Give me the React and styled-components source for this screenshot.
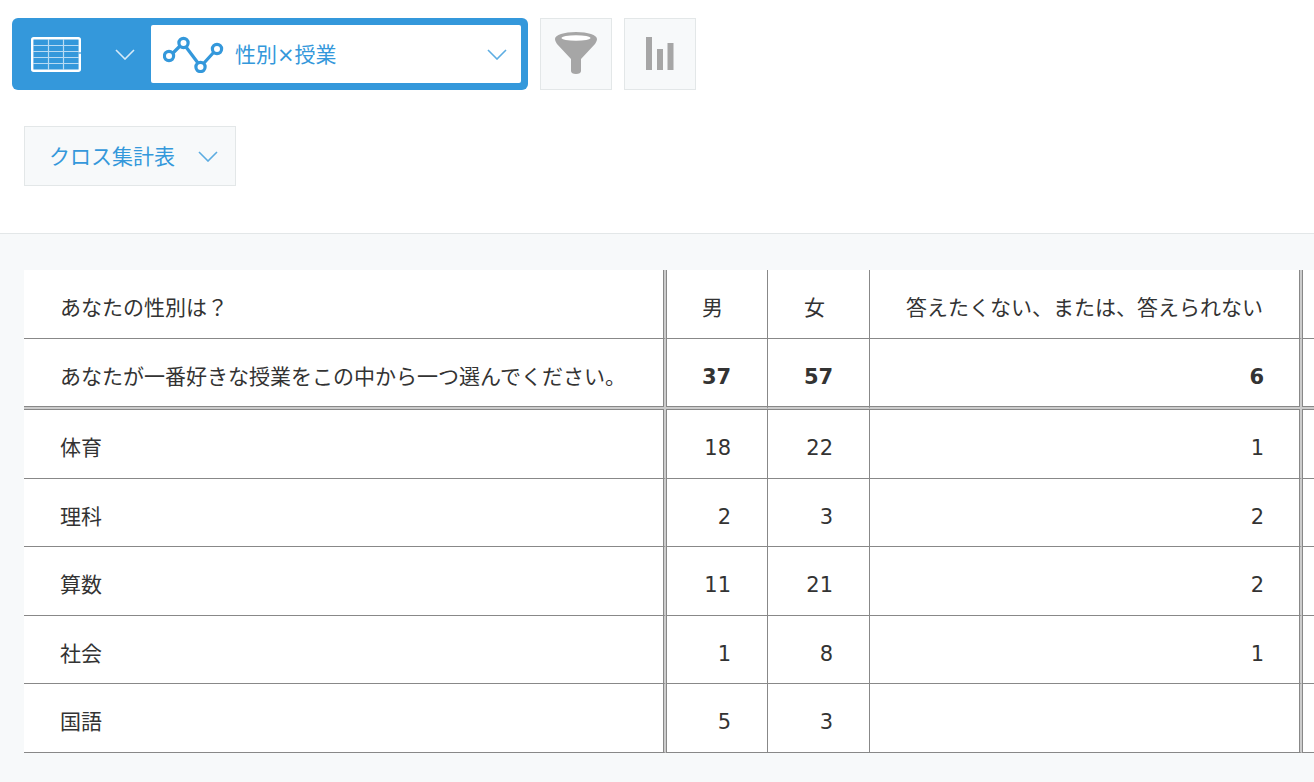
import React from 'react';
import styled, { createGlobalStyle } from 'styled-components';

const GlobalStyle = createGlobalStyle`
  html, body {
    margin: 0;
    padding: 0;
    height: 100%;
    background: #fff;
    overflow: hidden;
  }
  body {
    font-family: "DejaVu Sans", "Noto Sans CJK JP", sans-serif;
    color: #333;
  }
`;

const BLUE = '#3498db';
const LINE = '#888';
const LINE_MID = '#ccc';

// HEADER
const Header = styled.header`
  height: 234px;
  box-sizing: border-box;
  padding: 18px 0 0 12px;
  border-bottom: 1px solid #e3e7e8;
  background: #fff;
`;

const Toolbar = styled.div`
  display: flex;
  gap: 12px;
`;

const ViewPicker = styled.div`
  width: 516px;
  height: 72px;
  box-sizing: border-box;
  padding: 7px;
  display: flex;
  background: ${BLUE};
  border-radius: 6px;
`;

const ViewType = styled.div`
  width: 132px;
  display: flex;
  align-items: center;
  padding: 0 16px 0 12px;
  box-sizing: border-box;
  justify-content: space-between;
`;

const ViewName = styled.div`
  flex: 1;
  background: #fff;
  border-radius: 2px;
  display: flex;
  align-items: center;
  padding: 0 14px 0 12px;
  color: ${BLUE};
  font-size: 21px;
`;

const ViewLabel = styled.span`
  flex: 1;
  margin-left: 10px;
  padding-bottom: 3px;
`;

const IconButton = styled.button`
  width: 72px;
  height: 72px;
  padding: 0;
  display: flex;
  align-items: center;
  justify-content: center;
  background: #f7f9fa;
  border: 1px solid #e3e7e8;
`;

const SubBar = styled.div`
  margin: 36px 0 0 12px;
`;

const ReportSelect = styled.div`
  width: 212px;
  height: 60px;
  box-sizing: border-box;
  display: flex;
  align-items: center;
  padding: 0 17px 0 24px;
  justify-content: space-between;
  background: #f7f9fa;
  border: 1px solid #e3e7e8;
  color: ${BLUE};
  font-size: 21px;
`;

const ReportLabel = styled.span`
  padding-bottom: 3px;
`;

// TABLE
const Content = styled.main`
  height: 548px;
  padding: 36px 0 0 24px;
  background: #f7f9fa;
  overflow: hidden;
`;

const CrossTable = styled.table`
  width: 1340px;
  table-layout: fixed;
  border-collapse: separate;
  border-spacing: 0;
  background: #fff;
  font-size: 21px;
`;

// double rules are a light 2px middle with a dark pixel drawn on each side
const ruleShadow = p => {
  const shadows = [];
  if (p.$edge) shadows.push(`inset -1px 0 ${LINE}`, `1px 0 ${LINE}`);
  if (p.$thick) shadows.push(`inset 0 -1px ${LINE}`, `0 1px ${LINE}`);
  return shadows.length ? shadows.join(', ') : 'none';
};

const Cell = styled.td`
  height: ${p => p.$h || 68.5}px;
  padding: ${p => p.$top || 8}px 36px 0 36px;
  box-sizing: border-box;
  text-align: ${p => (p.$num ? 'right' : 'left')};
  font-weight: ${p => (p.$bold ? 700 : 400)};
  border-bottom: ${p => (p.$thick ? `2px solid ${LINE_MID}` : `1px solid ${LINE}`)};
  border-right: ${p => (p.$edge ? `2px solid ${LINE_MID}` : `1px solid ${LINE}`)};
  box-shadow: ${ruleShadow};
  white-space: nowrap;
  line-height: 1;
  &:last-child { border-right: 0; }
`;

const HeadCell = styled(Cell).attrs({ as: 'th' })`
  font-weight: 400;
  text-align: left;
`;

const Chevron = ({ color = BLUE, size = 20 }) => (
  <svg width={size} height={size * 0.55} viewBox="0 0 20 11" fill="none">
    <path d="M1 1l9 9 9-9" stroke={color} strokeOpacity="0.8" strokeWidth="1.6" />
  </svg>
);

const TableIcon = () => (
  <svg width="50" height="35" viewBox="0 0 50 35">
    <rect x="1.2" y="1.200" width="47.6" height="32.6" rx="1.5" fill={BLUE} stroke="#fff" strokeWidth="2.4" />
    <path d="M2 8.500h46M2 14.500h46M2 20.500h46M2 26.500h46M17.500 2v31M32.500 2v31" stroke="#b9dbf3" strokeWidth="1.2" />
    <path d="M47.500 16h3" stroke={BLUE} strokeWidth="1.200" />
  </svg>
);

const LineIcon = () => (
  <svg width="62" height="38" viewBox="0 0 62 38" fill="none" stroke={BLUE} strokeWidth="3.2">
    <path d="M10 18L17 11M23 12L35 28M41 28L51 17" />
    <circle cx="6" cy="21" r="4.600" />
    <circle cx="20.500" cy="8" r="4.600" />
    <circle cx="37.500" cy="32" r="4.600" />
    <circle cx="54" cy="14" r="4.600" />
  </svg>
);

const FunnelIcon = () => (
  <svg width="44" height="44" viewBox="0 0 44 44">
    <path d="M1 7C1 3 10 0 22 0s21 3 21 7c0 2-1 3-2 5L27 27v12c0 2-2 3-5 3s-5-1-5-3V27L3 12C2 10 1 9 1 7z" fill="#a6a6a6" />
    <ellipse cx="22" cy="6" rx="14.500" ry="2.800" fill="#fff" />
  </svg>
);

const BarsIcon = () => (
  <svg width="28" height="34" viewBox="0 0 28 34" fill="#a6a6a6">
    <rect x="0" y="0" width="6" height="33" />
    <rect x="11" y="12" width="6" height="21" />
    <rect x="21.500" y="6" width="6" height="27" />
  </svg>
);

const rows = [
  ['体育', 18, 22, 1, 70, 9],
  ['理科', 2, 3, 2, 68, 10],
  ['算数', 11, 21, 2, 69, 8],
  ['社会', 1, 8, 1, 68, 10],
  ['国語', 5, 3, '', 69, 9],
];

export default function App() {
  return (
    <>
      <GlobalStyle />
      <Header>
        <Toolbar>
          <ViewPicker>
            <ViewType>
              <TableIcon />
              <Chevron color="#fff" />
            </ViewType>
            <ViewName>
              <LineIcon />
              <ViewLabel>性別×授業</ViewLabel>
              <Chevron />
            </ViewName>
          </ViewPicker>
          <IconButton><FunnelIcon /></IconButton>
          <IconButton><BarsIcon /></IconButton>
        </Toolbar>
        <SubBar>
          <ReportSelect>
            <ReportLabel>クロス集計表</ReportLabel>
            <Chevron />
          </ReportSelect>
        </SubBar>
      </Header>
      <Content>
        <CrossTable>
          <colgroup>
            <col style={{ width: 642 }} />
            <col style={{ width: 102 }} />
            <col style={{ width: 102 }} />
            <col style={{ width: 432 }} />
            <col />
          </colgroup>
          <tbody>
            <tr>
              <HeadCell $edge $h={69}>あなたの性別は？</HeadCell>
              <HeadCell $h={69}>男</HeadCell>
              <HeadCell $h={69}>女</HeadCell>
              <HeadCell $edge $h={69}>答えたくない、または、答えられない</HeadCell>
              <HeadCell $h={69} />
            </tr>
            <tr>
              <Cell $edge $thick $h={70}>あなたが一番好きな授業をこの中から一つ選んでください。</Cell>
              <Cell $num $bold $thick $h={70}>37</Cell>
              <Cell $num $bold $thick $h={70}>57</Cell>
              <Cell $num $bold $thick $edge $h={70}>6</Cell>
              <Cell $thick $h={70} />
            </tr>
            {rows.map(r => (
              <tr key={r[0]}>
                <Cell $edge $h={r[4]} $top={r[5]}>{r[0]}</Cell>
                <Cell $num $h={r[4]} $top={r[5]}>{r[1]}</Cell>
                <Cell $num $h={r[4]} $top={r[5]}>{r[2]}</Cell>
                <Cell $num $edge $h={r[4]} $top={r[5]}>{r[3]}</Cell>
                <Cell $h={r[4]} $top={r[5]} />
              </tr>
            ))}
          </tbody>
        </CrossTable>
      </Content>
    </>
  );
}
